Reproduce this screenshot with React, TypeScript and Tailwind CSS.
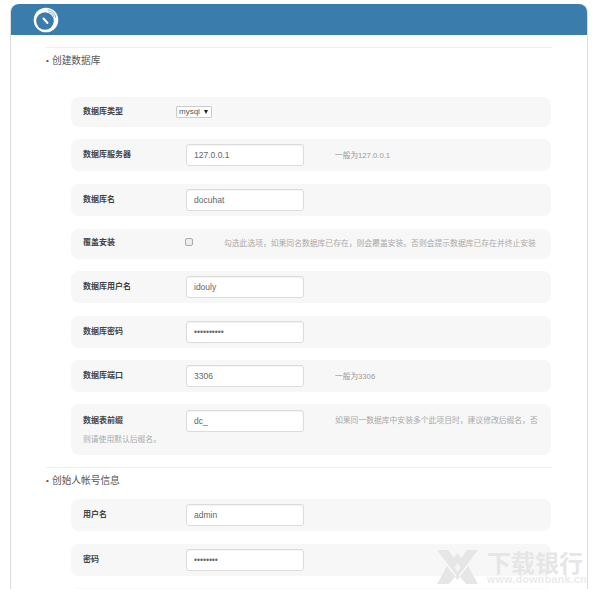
import React from 'react';

const inputClass =
  'w-[118px] h-[22px] bg-white border border-[#dcdcdc] rounded-[3px] px-[7px] text-[8.5px] text-[#666] font-["Liberation_Sans",sans-serif] outline-none shadow-[inset_0_1px_1px_rgba(0,0,0,0.05)]';

const overwriteHint = '勾选此选项\uFF0C如果同名数据库已存在\uFF0C则会覆盖安装\u3002否则会提示数据库已存在并终止安装';
const prefixHint = '如果同一数据库中安装多个此项目时\uFF0C建议修改后缀名\uFF0C否则请使用默认后缀名\u3002';

function Logo() {
  return (
    <svg width="26" height="26" viewBox="0 0 26 26" className="ml-[22px]">
      <circle cx="13" cy="13" r="12.3" fill="#fff" />
      <circle cx="12" cy="14" r="8.8" fill="#3a7cac" />
      <path d="M10.5 11.5 L14.5 16" stroke="#fff" strokeWidth="2" strokeLinecap="round" />
      <path d="M14.5 2.8 A8.5 8.5 0 0 1 22.8 11" fill="none" stroke="#8fb5d0" strokeWidth="1" />
      <path d="M15.5 5 A5.5 5.5 0 0 1 20.6 10" fill="none" stroke="#8fb5d0" strokeWidth="1" />
    </svg>
  );
}

function Row({
  label,
  h = 'h-8',
  mt = 'mt-3',
  value,
  type = 'text',
  hint,
}: {
  label: string;
  h?: string;
  mt?: string;
  value: string;
  type?: string;
  hint?: string;
}) {
  return (
    <div className={`${h} ${mt} flex items-center pl-3 bg-[#f7f7f7] rounded-lg`}>
      <span className="w-[103px] text-[8px] font-bold text-[#444]">{label}</span>
      <input className={inputClass} type={type} defaultValue={value} readOnly />
      {hint && <span className="ml-[31px] mt-[2px] text-[7.7px] text-[#999]">{hint}</span>}
    </div>
  );
}

function Heading({ children }: { children: React.ReactNode }) {
  return (
    <div className="flex items-center h-[24px] pt-[2px] text-[9.7px] text-[#555]">
      <span className="w-[6px] text-[8px]">•</span>
      {children}
    </div>
  );
}

export default function App() {
  return (
    <div className="h-[589px] overflow-hidden relative bg-white font-['Liberation_Sans','Noto_Sans_CJK_SC',sans-serif]">
      <div className="ml-[10px] mt-[4px] w-[578px] h-[700px] border border-t-0 border-[#ddd] rounded-t-lg">
        {/* top bar */}
        <div className="h-[31px] bg-[#3a7cac] rounded-t-lg flex items-center">
          <Logo />
        </div>

        <div className="ml-[35px] w-[506px] mt-[12px] border-t border-[#eee]">
          <Heading>创建数据库</Heading>
        </div>

        <div className="ml-[60px] w-[480px] mt-[25px]">
          <div className="h-[30px] flex items-center pl-3 bg-[#f7f7f7] rounded-lg">
            <span className="w-[93px] text-[8px] font-bold text-[#444]">数据库类型</span>
            <div className="relative w-[36px] h-[12px]">
              <select className="appearance-none block w-full h-full pl-[2px] bg-white border border-[#ccc] rounded-[1px] text-[8px] text-[#555] leading-none font-['Liberation_Sans',sans-serif]">
                <option>mysql</option>
              </select>
              <span className="absolute right-[4px] top-[4px] w-0 h-0 border-x-[2.5px] border-x-transparent border-t-[4px] border-t-[#222]" />
            </div>
          </div>
          <Row label="数据库服务器" value="127.0.0.1" hint="一般为127.0.0.1" />
          <Row label="数据库名" value="docuhat" mt="mt-[13px]" />
          <div className="h-[30px] mt-[13px] flex items-center pl-3 bg-[#f7f7f7] rounded-lg">
            <span className="w-[102px] -mt-[2px] text-[8px] font-bold text-[#444]">覆盖安装</span>
            <input
              type="checkbox"
              className="appearance-none w-[8px] h-[8px] m-0 -mt-[4px] border border-[#aaa] rounded-[2px] bg-[#eee]"
              readOnly
            />
            <span className="ml-[31px] -mt-[1px] text-[7.8px] text-[#aaa] whitespace-nowrap">{overwriteHint}</span>
          </div>
          <Row label="数据库用户名" value="idouly" />
          <Row label="数据库密码" type="password" value="1234567890" mt="mt-[13px]" />
          <Row label="数据库端口" value="3306" hint="一般为3306" />
          <div className="h-[51px] mt-3 px-3 pt-[6px] bg-[#f7f7f7] rounded-lg text-[7.8px] leading-[16px] text-[#aaa]">
            <span className="inline-block align-middle w-[103px] text-[8px] font-bold text-[#444]">数据表前缀</span>
            <input className={`${inputClass} align-middle`} defaultValue="dc_" readOnly />
            <span className="ml-[31px] align-middle">{prefixHint}</span>
          </div>
        </div>

        <div className="ml-[35px] w-[506px] mt-[12px] border-t border-[#eee]">
          <Heading>创始人帐号信息</Heading>
        </div>

        <div className="ml-[60px] w-[480px] mt-[7px]">
          <Row label="用户名" value="admin" mt="mt-0" />
          <Row label="密码" type="password" value="12345678" mt="mt-[13px]" />
          <div className="h-8 mt-3 bg-[#f7f7f7] rounded-lg" />
        </div>
      </div>

      {/* watermark */}
      <div className="absolute left-[437px] top-[550px] flex items-start gap-[9px] pointer-events-none">
        <svg width="41" height="34" viewBox="0 0 41 34">
          <path d="M0 0 H11 L20.5 13 L30 0 H41 L20.5 27 Z" fill="#e6e6e6" />
          <path d="M20.5 3 L27 12 L20.5 21 L14 12 Z" fill="#e6e6e6" />
          <path d="M10 16 L20.5 30 L31 16 L41 34 H29 L20.5 24 L12 34 H0 Z" fill="#e6e6e6" />
          <path d="M20.5 13 L23.5 17.5 L20.5 22 L17.5 17.5 Z" fill="#f5f5f5" />
        </svg>
        <div className="flex flex-col w-[98px]">
          <span className="text-[24px] leading-[24px] font-bold text-[#e6e6e6] whitespace-nowrap font-['Noto_Sans_CJK_SC',sans-serif]">下载银行</span>
          <span className="text-[10.5px] leading-[11px] font-bold tracking-[0.4px] text-[#ebebeb] whitespace-nowrap">www.downbank.cn</span>
        </div>
      </div>
    </div>
  );
}
